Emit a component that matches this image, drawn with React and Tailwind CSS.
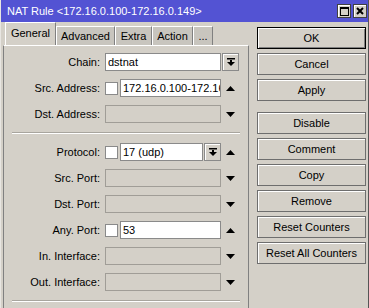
import React from "react";

const FONT = { fontFamily: '"Liberation Sans", Arial, sans-serif' };

function DownTri() {
  return (
    <svg width="9" height="5" viewBox="0 0 9 5">
      <polygon points="0,0 9,0 4.5,5" fill="#000" />
    </svg>
  );
}

function UpTri() {
  return (
    <svg width="9" height="5" viewBox="0 0 9 5">
      <polygon points="0,5 9,5 4.5,0" fill="#000" />
    </svg>
  );
}

function DropBtn() {
  return (
    <div className="flex h-[18px] w-[17px] shrink-0 items-center justify-center border border-[#8a8a8a] bg-[#d4d0c8] shadow-[inset_1px_1px_0_#fff]">
      <svg width="8" height="8" viewBox="0 0 8 8">
        <rect x="0" y="0" width="8" height="1.5" fill="#000" />
        <rect x="3" y="2" width="2" height="2" fill="#000" />
        <polygon points="0,4 8,4 4,8" fill="#000" />
      </svg>
    </div>
  );
}

function Check() {
  return (
    <div className="mr-[2px] h-[13px] w-[13px] shrink-0 border border-[#8a8a8a] bg-white" />
  );
}

function Field({ value, disabled, w }) {
  return (
    <div
      className={
        "flex h-[18px] shrink-0 items-center overflow-hidden whitespace-nowrap border border-[#8a8a8a] pl-[2px] text-[11px] text-black " +
        (disabled ? "bg-[#d4d0c8] border-[#a09d97] " : "bg-white ") +
        w
      }
    >
      {value}
    </div>
  );
}

function Row({ label, children, tail }) {
  return (
    <div className="flex h-[26px] items-center">
      <div className="w-[97px] shrink-0 pr-[1px] text-right text-[11px] text-black">
        {label}
      </div>
      <div className="ml-[4px] flex w-[116px] shrink-0 items-center">
        {children}
      </div>
      <div className="ml-px flex w-[17px] shrink-0 justify-center">{tail}</div>
    </div>
  );
}

function Sep() {
  return (
    <div className="mx-[8px] my-[5px] h-[2px] border-t border-[#a8a59e] border-b border-b-white" />
  );
}

function Btn({ label, def }) {
  return (
    <div
      className={
        "flex h-[22px] w-[109px] items-center justify-center bg-[#d4d0c8] text-[11px] text-black " +
        (def
          ? "border border-black shadow-[inset_1px_1px_0_#fff,inset_-1px_-1px_0_#808080]"
          : "border border-[#6e6e6e] shadow-[inset_1px_1px_0_#fff]")
      }
    >
      {label}
    </div>
  );
}

function Tab({ label, active, w }) {
  return (
    <div
      className={
        "flex items-center justify-center border-l border-t border-r border-l-white border-t-white border-r-[#808080] text-[11px] text-black " +
        (active
          ? "h-[23px] bg-[#d4d0c8] pb-[2px] "
          : "mt-[4px] h-[19px] bg-[#c8c5be] ") +
        w
      }
    >
      {label}
    </div>
  );
}

export default function App() {
  return (
    <div
      className="h-[308px] w-[369px] overflow-hidden border-l border-r border-l-[#e8e6e2] border-r-[#555] bg-[#d4d0c8]"
      style={FONT}
    >
      {/* title bar */}
      <div className="flex h-[22px] items-center bg-[#5353d3] pl-[6px] pr-[1px]">
        <span className="flex-1 text-[11px] text-white">
          NAT Rule &lt;172.16.0.100-172.16.0.149&gt;
        </span>
        <div className="flex gap-[2px]">
          <div className="flex h-[14px] w-[14px] items-center justify-center border border-[#404040] bg-[#d4d0c8] shadow-[inset_1px_1px_0_#fff]">
            <svg width="9" height="9" viewBox="0 0 9 9">
              <rect x="0.5" y="0.5" width="8" height="8" fill="none" stroke="#000" />
              <rect x="0" y="0" width="9" height="2" fill="#000" />
            </svg>
          </div>
          <div className="flex h-[14px] w-[14px] items-center justify-center border border-[#404040] bg-[#d4d0c8] shadow-[inset_1px_1px_0_#fff]">
            <svg width="8" height="8" viewBox="0 0 8 8">
              <path d="M1 1 L7 7 M7 1 L1 7" stroke="#000" strokeWidth="2" />
            </svg>
          </div>
        </div>
      </div>

      <div className="flex">
        {/* left: tabs + panel */}
        <div className="ml-[2px] flex w-[246px] shrink-0 flex-col">
          <div className="flex h-[23px] items-start pl-[2px]">
            <Tab label="General" active w="w-[51px]" />
            <Tab label="Advanced" w="w-[59px]" />
            <Tab label="Extra" w="w-[37px]" />
            <Tab label="Action" w="w-[41px]" />
            <Tab label="..." w="w-[20px]" />
          </div>
          <div className="h-[300px] border-l border-r border-t border-l-[#808080] border-r-[#808080] border-t-white pt-[3px]">
            <Row label="Chain:" tail={<DropBtn />}>
              <Field value="dstnat" w="w-[116px]" />
            </Row>
            <Row label="Src. Address:" tail={<UpTri />}>
              <Check />
              <Field value="172.16.0.100-172.16.0.149" w="w-[101px]" />
            </Row>
            <Row label="Dst. Address:" tail={<DownTri />}>
              <Field disabled w="w-[116px]" />
            </Row>
            <Sep />
            <Row label="Protocol:" tail={<UpTri />}>
              <Check />
              <Field value="17 (udp)" w="w-[83px]" />
              <div className="ml-px">
                <DropBtn />
              </div>
            </Row>
            <Row label="Src. Port:" tail={<DownTri />}>
              <Field disabled w="w-[116px]" />
            </Row>
            <Row label="Dst. Port:" tail={<DownTri />}>
              <Field disabled w="w-[116px]" />
            </Row>
            <Row label="Any. Port:" tail={<UpTri />}>
              <Check />
              <Field value="53" w="w-[101px]" />
            </Row>
            <Row label="In. Interface:" tail={<DownTri />}>
              <Field disabled w="w-[116px]" />
            </Row>
            <Row label="Out. Interface:" tail={<DownTri />}>
              <Field disabled w="w-[116px]" />
            </Row>
            <Sep />
          </div>
        </div>

        {/* right: buttons */}
        <div className="ml-[8px] flex flex-col gap-[4px] pt-[5px]">
          <Btn label="OK" def />
          <Btn label="Cancel" />
          <Btn label="Apply" />
          <div className="mt-[7px]">
            <Btn label="Disable" />
          </div>
          <Btn label="Comment" />
          <Btn label="Copy" />
          <Btn label="Remove" />
          <Btn label="Reset Counters" />
          <Btn label="Reset All Counters" />
        </div>
      </div>
    </div>
  );
}
